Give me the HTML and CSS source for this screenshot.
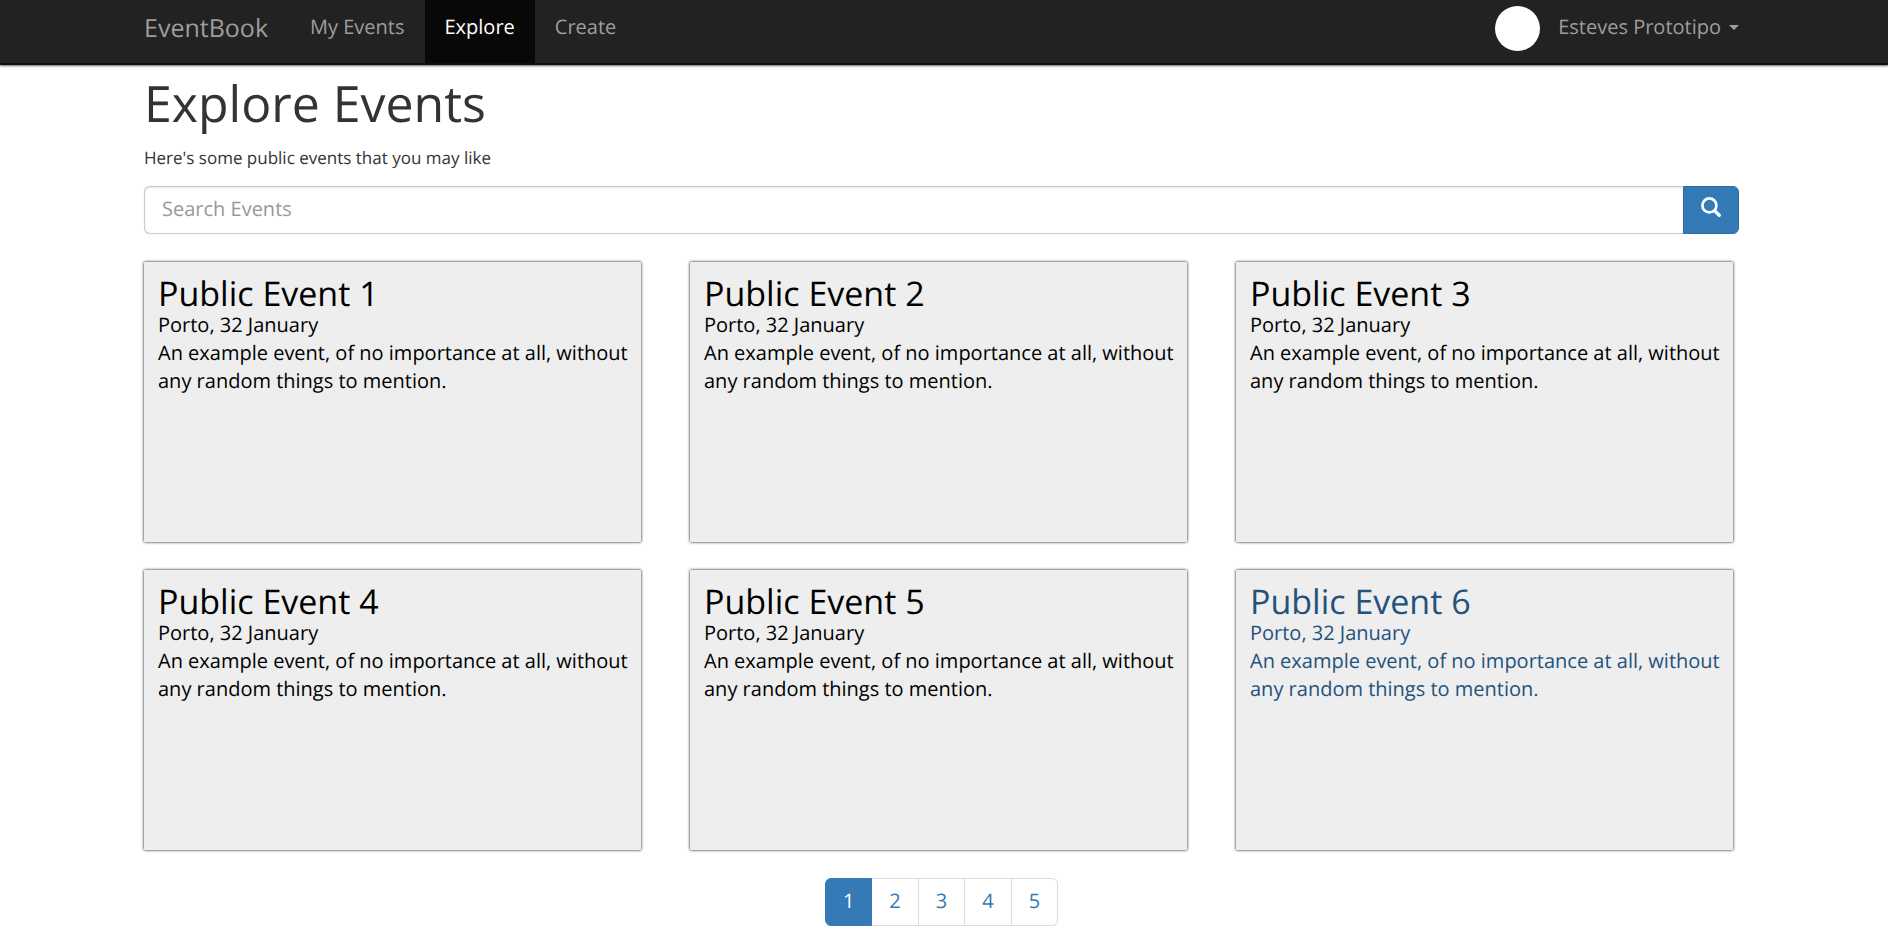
FILE: index.html
```html
<!DOCTYPE html>
<html lang="en">
<head>
<meta charset="utf-8">
<title>EventBook</title>
<link rel="stylesheet" href="styles.css">
</head>
<body>
<header class="navbar">
  <div class="container navbar-inner">
    <a class="brand" href="#">EventBook</a>
    <nav class="nav">
      <a class="nav-link" href="#">My Events</a>
      <a class="nav-link active" href="#" aria-current="page">Explore</a>
      <a class="nav-link" href="#">Create</a>
    </nav>
    <div class="user">
      <span class="avatar"></span>
      <button class="user-menu" type="button">Esteves Prototipo<span class="caret"></span></button>
    </div>
  </div>
</header>
<main class="container">
  <h1 class="page-title">Explore Events</h1>
  <p class="lead">Here's some public events that you may like</p>
  <form class="search">
    <input class="search-input" type="text" placeholder="Search Events" aria-label="Search Events">
    <button class="search-button" type="button" aria-label="Search">
      <svg class="search-icon" viewBox="0 0 20 20" fill="none" stroke="#fff" aria-hidden="true">
        <circle cx="8.4" cy="8.4" r="7" stroke-width="2.7"/>
        <path d="M13.6 13.6l4.6 4.6" stroke-width="3.4" stroke-linecap="round"/>
      </svg>
    </button>
  </form>
  <section class="events">
    <a class="event" href="#">
      <h2 class="event-title">Public Event 1</h2>
      <p class="event-text">Porto, 32 January</p>
      <p class="event-text">An example event, of no importance at all, without any random things to mention.</p>
    </a>
    <a class="event" href="#">
      <h2 class="event-title">Public Event 2</h2>
      <p class="event-text">Porto, 32 January</p>
      <p class="event-text">An example event, of no importance at all, without any random things to mention.</p>
    </a>
    <a class="event" href="#">
      <h2 class="event-title">Public Event 3</h2>
      <p class="event-text">Porto, 32 January</p>
      <p class="event-text">An example event, of no importance at all, without any random things to mention.</p>
    </a>
    <a class="event" href="#">
      <h2 class="event-title">Public Event 4</h2>
      <p class="event-text">Porto, 32 January</p>
      <p class="event-text">An example event, of no importance at all, without any random things to mention.</p>
    </a>
    <a class="event" href="#">
      <h2 class="event-title">Public Event 5</h2>
      <p class="event-text">Porto, 32 January</p>
      <p class="event-text">An example event, of no importance at all, without any random things to mention.</p>
    </a>
    <a class="event highlighted" href="#">
      <h2 class="event-title">Public Event 6</h2>
      <p class="event-text">Porto, 32 January</p>
      <p class="event-text">An example event, of no importance at all, without any random things to mention.</p>
    </a>
  </section>
  <nav class="pagination" aria-label="Pages">
    <a class="page current" href="#" aria-current="page">1</a>
    <a class="page" href="#">2</a>
    <a class="page" href="#">3</a>
    <a class="page" href="#">4</a>
    <a class="page" href="#">5</a>
  </nav>
</main>
</body>
</html>
```
FILE: styles.css
```css
* {
  box-sizing: border-box;
}

body {
  margin: 0;
  background: #fff;
  color: #333;
  font-family: "Open Sans", "Noto Sans", sans-serif;
  font-size: 20px;
  line-height: 28px;
  text-rendering: geometricPrecision;
}

h1, h2, p {
  margin: 0;
  font-weight: 400;
}

a {
  color: inherit;
  text-decoration: none;
}

.container {
  max-width: 1888px;
  margin: 0 auto;
  padding: 0 149px 0 144px;
}

.navbar {
  background: #222;
  border-bottom: 2px solid #101010;
  box-shadow: 0 1px 2px rgba(0, 0, 0, 0.6);
  color: #9d9d9d;
}

.navbar-inner {
  display: flex;
  height: 63px;
}

.brand {
  padding: 14px 22px 0 0;
  font-size: 25px;
}

.nav {
  display: flex;
}

.nav-link {
  padding: 13px 20px 0;
}

.nav-link.active {
  background: #080808;
  color: #fff;
}

.user {
  display: flex;
  align-items: flex-start;
  margin-left: auto;
}

.avatar {
  width: 45px;
  height: 45px;
  margin: 6px 18px 0 0;
  border-radius: 50%;
  background: #fff;
}

.user-menu {
  display: flex;
  align-items: center;
  gap: 8px;
  padding: 13px 0 0;
  border: 0;
  background: none;
  color: inherit;
  font: inherit;
  text-rendering: inherit;
}

.caret {
  border: 5px solid transparent;
  border-top-color: #9d9d9d;
  border-bottom: 0;
}

.page-title {
  padding-top: 8px;
  font-size: 50px;
  line-height: 60px;
}

.lead {
  padding-top: 13px;
  font-size: 17px;
  line-height: 24px;
}

.search {
  display: flex;
  height: 48px;
  margin-top: 16px;
}

.search-input {
  flex: 1;
  min-width: 0;
  padding: 0 17px 2px;
  border: 1px solid #ccc;
  border-right: 0;
  border-radius: 6px 0 0 6px;
  box-shadow: inset 0 1px 2px rgba(0, 0, 0, 0.1), 0 0 1px #ccc;
  color: #555;
  font: inherit;
  text-rendering: inherit;
}

.search-input::placeholder {
  color: #999;
  opacity: 1;
}

.search-button {
  display: flex;
  justify-content: center;
  width: 56px;
  padding: 10px 0 0;
  border: 1px solid #2e6da4;
  border-radius: 0 6px 6px 0;
  background: #337ab7;
}

.search-icon {
  width: 20px;
  height: 20px;
}

.events {
  display: grid;
  grid-template-columns: repeat(3, 1fr);
  gap: 28px 49px;
  margin-top: 28px;
  padding-right: 6px;
}

.event {
  min-height: 280px;
  padding: 13px 0 14px 14px;
  border-radius: 1px;
  background: #eee;
  box-shadow: 0 0 3px #000;
  color: #000;
}

.event.highlighted {
  color: #23527c;
}

.event-title {
  font-size: 34px;
  line-height: 36px;
}

.pagination {
  display: flex;
  justify-content: center;
  margin: 28px 0 4px;
}

.page {
  padding: 8px 17px 10px;
  border: 1px solid #ddd;
  border-left: 0;
  color: #337ab7;
}

.page.current {
  border: 1px solid #337ab7;
  border-radius: 6px 0 0 6px;
  background: #337ab7;
  color: #fff;
}

.page:last-child {
  border-radius: 0 6px 6px 0;
}
```
